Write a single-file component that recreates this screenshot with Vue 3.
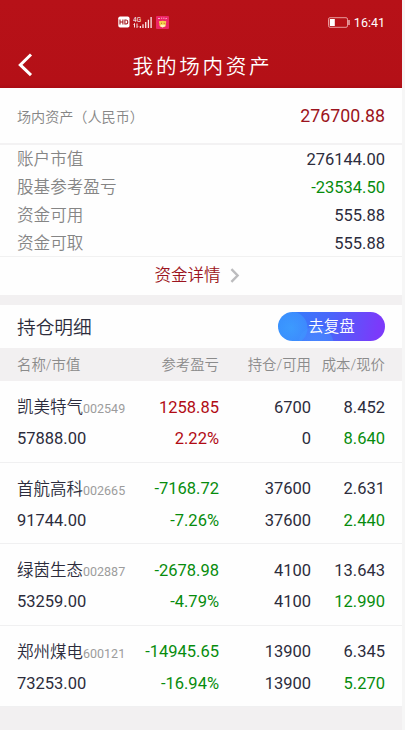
<template>
  <div class="page">
    <div class="screen">
      <header class="header">
        <div class="status-bar">
          <div class="status-left">
            <svg class="hd" width="12" height="12" viewBox="0 0 12 12">
              <rect x=".3" y=".5" width="11.2" height="11" rx="1.8" fill="#fff" />
              <path d="M2 3.5v5M4.9 3.5v5M2 6h2.9M6.9 3.5v5M6.9 4h1.2q1.7 0 1.7 2t-1.7 2H6.9" fill="none" stroke="#a5161c" stroke-width="1.1" />
            </svg>
            <svg class="signal" width="20" height="13" viewBox="0 0 20 13">
              <text x="0" y="5.8" class="net">4G</text>
              <path d="M1.5 7.5v4M.5 8.5l1-1M4 7.5v4M5 10.5l-1 1" stroke="#fff" stroke-width=".9" fill="none" />
              <path d="M7.4 10v2M10 8.2v3.8M12.7 6v6M15.4 3.7v8.3M18.1 1v11" stroke="#fbe9e9" stroke-width="1.3" />
            </svg>
            <svg class="app-icon" width="13" height="13" viewBox="0 0 13 13">
              <rect width="13" height="13" rx="1" fill="#ed2466" />
              <path d="M2 2.8q1-1.2 2 0M5 2.2h1.2M7.2 2.2h1.3M9.4 2.8q.8-1 1.6 0" fill="none" stroke="#f8b4ca" />
              <circle cx="6.6" cy="8" r="3.3" fill="#f4cf4c" />
              <circle cx="4" cy="6" r="1.1" fill="#f8d24b" />
              <circle cx="9.2" cy="6" r="1.1" fill="#f8d24b" />
              <path d="M5.2 7.3h.8M7.8 7.3h.8" stroke="#8b431d" stroke-width=".8" />
              <path d="M4 10l2.4 1.6L9.8 10l-1.6-1.2H5.2z" fill="#fff3bd" />
            </svg>
          </div>
          <div class="status-right">
            <svg width="22" height="11" viewBox="0 0 22 11">
              <rect x=".5" y=".7" width="19" height="9.6" rx="1.5" fill="none" stroke="#e89a9c" />
              <rect x="1.8" y="2" width="5" height="7" fill="#fff" />
              <path d="M21 3v5" stroke="#f5d5d5" stroke-width="1.2" />
            </svg>
            <span>16:41</span>
          </div>
        </div>
        <div class="nav">
          <svg class="back" width="16" height="24" viewBox="0 0 16 24">
            <path d="M14 1.5L3.3 11.9 14 22.2" fill="none" stroke="#fff" stroke-width="3" />
          </svg>
          <h1>我的场内资产</h1>
        </div>
      </header>

      <!-- 资产汇总 -->
      <section class="total">
        <span class="total-label">场内资产（人民币）</span>
        <span class="total-value">276700.88</span>
      </section>
      <section class="summary">
        <div v-for="item in summary" :key="item.label" class="summary-row">
          <span class="summary-label">{{ item.label }}</span>
          <span :class="trend(item.value)">{{ item.value }}</span>
        </div>
      </section>
      <div class="detail-link">
        <span>资金详情</span>
        <svg width="10" height="15" viewBox="0 0 10 15">
          <path d="M1.4 1.2l6.2 6.3-6.2 6.3" fill="none" stroke="#bcbcbe" stroke-width="2.4" />
        </svg>
      </div>

      <!-- 持仓明细 -->
      <section class="section-title">
        <h2>持仓明细</h2>
        <button class="review">
          <span>去复盘</span>
        </button>
      </section>
      <div class="grid table-head">
        <span v-for="col in columns" :key="col">{{ col }}</span>
      </div>
      <div v-for="row in holdings" :key="row.code" class="grid holding">
        <div class="name">{{ row.name }}<small>{{ row.code }}</small></div>
        <div :class="trend(row.profit, true)">{{ row.profit }}</div>
        <div>{{ row.amount }}</div>
        <div>{{ row.cost }}</div>
        <div>{{ row.market }}</div>
        <div :class="trend(row.rate, true)">{{ row.rate }}</div>
        <div>{{ row.available }}</div>
        <div class="down">{{ row.price }}</div>
      </div>
    </div>
  </div>
</template>

<script setup>
const summary = [
  { label: "账户市值", value: "276144.00" },
  { label: "股基参考盈亏", value: "-23534.50" },
  { label: "资金可用", value: "555.88" },
  { label: "资金可取", value: "555.88" },
];

const columns = ["名称/市值", "参考盈亏", "持仓/可用", "成本/现价"];

const holdings = [
  { name: "凯美特气", code: "002549", market: "57888.00", profit: "1258.85", rate: "2.22%", amount: 6700, available: 0, cost: "8.452", price: "8.640" },
  { name: "首航高科", code: "002665", market: "91744.00", profit: "-7168.72", rate: "-7.26%", amount: 37600, available: 37600, cost: "2.631", price: "2.440" },
  { name: "绿茵生态", code: "002887", market: "53259.00", profit: "-2678.98", rate: "-4.79%", amount: 4100, available: 4100, cost: "13.643", price: "12.990" },
  { name: "郑州煤电", code: "600121", market: "73253.00", profit: "-14945.65", rate: "-16.94%", amount: 13900, available: 13900, cost: "6.345", price: "5.270" },
];

// 亏损为绿色，盈利为红色
function trend(value, colored = false) {
  if (value.startsWith("-")) return "down";
  return colored ? "up" : "";
}
</script>

<style>
body {
  background: #f6f6f6;
}
</style>

<style scoped>
.page {
  height: 730px;
  overflow: hidden;
  font-family: Roboto, "Noto Sans CJK SC", sans-serif;
  font-size: 16.5px;
  color: #2c2c3c;
}

.screen {
  width: 402px;
  height: 730px;
  background: #f2f0f1;
}

.header {
  height: 88px;
  box-sizing: border-box;
  background: linear-gradient(#b71118 0, #b41017 84px, #a90c14 88px);
  color: #fff;
}

.status-bar {
  display: flex;
  justify-content: space-between;
  align-items: center;
  height: 44px;
  padding: 0 17px 0 118px;
}

.status-left,
.status-right {
  display: flex;
  align-items: center;
}

.signal {
  margin: 0 3px;
}

.net {
  font-size: 6.5px;
  font-weight: 400;
  fill: #fff;
}

.status-right {
  gap: 4px;
  font-size: 12.5px;
}

.nav {
  display: flex;
  align-items: center;
  height: 42px;
  padding-left: 17px;
}

.back {
  flex: none;
}

h1 {
  flex: 1;
  margin: 0 33px 0 0;
  padding-left: 3px;
  font-size: 20.6px;
  font-weight: 350;
  letter-spacing: 2.7px;
  text-align: center;
}

.total,
.summary-row,
.section-title {
  display: flex;
  align-items: center;
  justify-content: space-between;
}

.total {
  height: 57px;
  box-sizing: border-box;
  padding: 0 17px;
  background: #fefefe;
  border-bottom: 2px solid #f3f2f3;
}

.total-label {
  font-size: 14.1px;
  font-weight: 350;
  color: #858585;
}

.total-value {
  font-size: 17.8px;
  color: #9c1420;
}

.summary {
  padding: 1px 17px 0;
  background: #fefefe;
  border-bottom: 1px solid #f1f1f1;
}

.summary-row {
  align-items: flex-start;
  height: 28px;
  line-height: 28px;
}

.summary-row:last-child {
  height: 26px;
}

.summary-label {
  font-size: 16.6px;
  font-weight: 350;
  color: #858585;
}

.detail-link {
  display: flex;
  align-items: center;
  justify-content: center;
  gap: 9px;
  height: 38px;
  box-sizing: border-box;
  padding: 0 8px 5px 0;
  background: #fefefe;
  color: #9c1420;
  font-weight: 350;
}

.detail-link svg {
  margin-top: 4px;
}

.section-title {
  height: 43px;
  margin-top: 10px;
  padding: 0 17px;
  background: #fefefe;
}

h2 {
  margin: 0 0 2px;
  font-size: 18.7px;
  font-weight: 350;
}

.review {
  width: 107px;
  height: 29px;
  padding: 1px 0 0;
  border: 0;
  border-radius: 15px;
  background:
    radial-gradient(circle at 13px 16px, rgba(62, 165, 255, 0.75) 0, rgba(62, 150, 255, 0.65) 16px, transparent 17px),
    radial-gradient(circle at 38px 32px, rgba(72, 145, 255, 0.7) 0, rgba(72, 135, 255, 0.6) 17px, transparent 18px),
    linear-gradient(100deg, #2f85fb, #4a65fa 48%, #7b3afa 92%);
  font-family: inherit;
  font-size: 15.5px;
  font-weight: 350;
  line-height: 28px;
  color: #fff;
}

.grid {
  display: grid;
  grid-template-columns: 122px 80px 92px 74px;
  padding: 0 17px;
  text-align: right;
}

.grid > :nth-child(4n + 1) {
  text-align: left;
}

.table-head {
  height: 33px;
  line-height: 36px;
  font-size: 14.4px;
  font-weight: 350;
  color: #8b8b8b;
  white-space: nowrap;
}

.holding {
  height: 81.5px;
  box-sizing: border-box;
  grid-auto-rows: 31.5px;
  padding-top: 10.5px;
  background: #fefefe;
  border-bottom: 1px solid #f0f0f1;
  line-height: 31.5px;
}

.name {
  white-space: nowrap;
  padding-top: 0.5px;
  font-weight: 350;
}

.name small {
  font-size: 12.5px;
  font-weight: 400;
  color: #9c9c9c;
}

.up {
  color: #b10b14;
}

.down {
  color: #078c0d;
}
</style>
